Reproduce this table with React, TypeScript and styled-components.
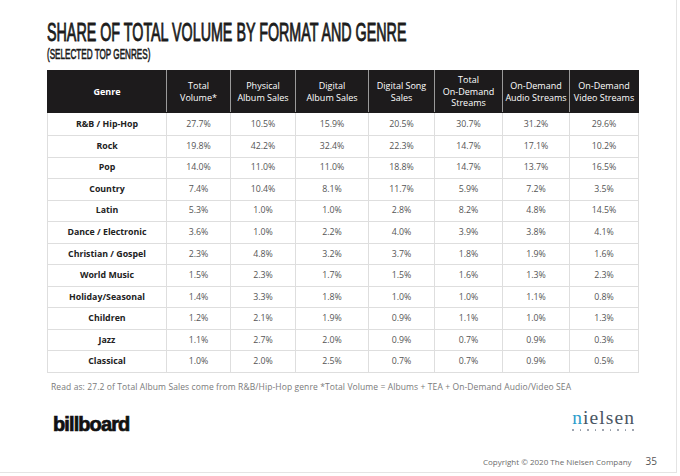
import React from 'react';
import styled, { createGlobalStyle } from 'styled-components';

const Global = createGlobalStyle`
  body {
    margin: 0;
    background: #fff;
    font-family: "Open Sans", "Liberation Sans", sans-serif;
  }
`;

const Page = styled.div`
  width: 677px;
  height: 473px;
  border-right: 1px solid #e4e4e4;
  border-bottom: 1px solid #e4e4e4;
  padding: 20px 0 0 47px;
  box-sizing: border-box;
  overflow: hidden;
`;

const Title = styled.h1`
  margin: 0;
  font-family: "Liberation Sans", Arial, sans-serif;
  font-weight: 400;
  font-size: 25px;
  line-height: 25px;
  color: #1c1c1c;
  -webkit-text-stroke: 0.9px #1c1c1c;
  white-space: nowrap;
  display: inline-block;
  transform: scaleX(0.572);
  transform-origin: left top;
`;

const Subtitle = styled.h2`
  margin: 2px 0 0;
  font-family: "Liberation Sans", Arial, sans-serif;
  font-weight: 400;
  font-size: 14px;
  line-height: 14px;
  color: #1c1c1c;
  -webkit-text-stroke: 0.6px #1c1c1c;
  white-space: nowrap;
  display: inline-block;
  transform: scaleX(0.58);
  transform-origin: left top;
`;

const TitleBlock = styled.div`
  display: flex;
  flex-direction: column;
  align-items: flex-start;
  height: 50px;
`;

const Table = styled.table`
  border-collapse: collapse;
  table-layout: fixed;
  width: 591px;
  font-size: 8.8px;
`;

const HeadCell = styled.th<{ $w: number; $bold?: boolean }>`
  width: ${(p) => p.$w}px;
  height: 42px;
  padding: 0;
  box-sizing: border-box;
  background: #1d1b1c;
  color: #fff;
  font-weight: ${(p) => (p.$bold ? 700 : 400)};
  font-size: 9px;
  line-height: 11.5px;
  white-space: nowrap;
  text-align: center;
  vertical-align: middle;
  border: 1px solid #9a9a9a;
  border-top-color: #1d1b1c;
  border-bottom-color: #1d1b1c;
  &:first-child { border-left-color: #1d1b1c; }
  &:last-child { border-right-color: #1d1b1c; }
`;

const Row = styled.tr<{ $first?: boolean }>`
  height: ${(p) => (p.$first ? 23 : 21.55)}px;
`;

const Cell = styled.td<{ $genre?: boolean }>`
  padding: 0;
  text-align: center;
  vertical-align: middle;
  border: 1px solid #dedede;
  color: ${(p) => (p.$genre ? '#222' : '#555')};
  font-weight: ${(p) => (p.$genre ? 700 : 400)};
  line-height: 11px;
`;

const Footnote = styled.p`
  margin: 8px 0 0 4px;
  font-size: 8.5px;
  line-height: 12px;
  color: #7a7a7a;
  letter-spacing: 0.1px;
`;

const Brands = styled.div`
  display: flex;
  justify-content: space-between;
  align-items: flex-start;
  width: 581px;
  margin: 16px 0 0 6px;
`;

const Billboard = styled.span`
  font-family: "Liberation Sans", Arial, sans-serif;
  font-weight: 700;
  font-size: 20px;
  line-height: 20px;
  letter-spacing: -0.9px;
  color: #111;
  -webkit-text-stroke: 0.7px #111;
  margin-top: 5px;
`;

const Nielsen = styled.div`
  display: flex;
  flex-direction: column;
  align-items: center;
`;

const NielsenWord = styled.span`
  font-family: "Liberation Serif", "Times New Roman", serif;
  font-size: 19.5px;
  line-height: 17px;
  letter-spacing: 1.1px;
  margin-right: -1.1px;
  color: #4a5563;
`;

const NielsenN = styled.span`
  color: #2b9dcc;
`;

const Dots = styled.div`
  display: flex;
  gap: 5.9px;
  margin-top: 3px;
  span {
    width: 1.6px;
    height: 1.6px;
    border-radius: 50%;
    background: #8d95a0;
  }
`;

const Copyright = styled.div`
  display: flex;
  justify-content: flex-end;
  align-items: baseline;
  gap: 14px;
  padding-right: 19px;
  margin-top: 21px;
  font-size: 8px;
  line-height: 12px;
  color: #6b6b6b;
`;

const PageNum = styled.span`
  font-size: 10px;
  color: #555;
`;

const columns: { label: React.ReactNode; w: number }[] = [
  { label: 'Genre', w: 119 },
  { label: <>Total<br />Volume*</>, w: 64 },
  { label: <>Physical<br />Album Sales</>, w: 65 },
  { label: <>Digital<br />Album Sales</>, w: 73 },
  { label: <>Digital Song<br />Sales</>, w: 66 },
  { label: <>Total<br />On-Demand<br />Streams</>, w: 68 },
  { label: <>On-Demand<br />Audio Streams</>, w: 67 },
  { label: <>On-Demand<br />Video Streams</>, w: 69 },
];

const rows: [string, ...string[]][] = [
  ['R&B / Hip-Hop', '27.7%', '10.5%', '15.9%', '20.5%', '30.7%', '31.2%', '29.6%'],
  ['Rock', '19.8%', '42.2%', '32.4%', '22.3%', '14.7%', '17.1%', '10.2%'],
  ['Pop', '14.0%', '11.0%', '11.0%', '18.8%', '14.7%', '13.7%', '16.5%'],
  ['Country', '7.4%', '10.4%', '8.1%', '11.7%', '5.9%', '7.2%', '3.5%'],
  ['Latin', '5.3%', '1.0%', '1.0%', '2.8%', '8.2%', '4.8%', '14.5%'],
  ['Dance / Electronic', '3.6%', '1.0%', '2.2%', '4.0%', '3.9%', '3.8%', '4.1%'],
  ['Christian / Gospel', '2.3%', '4.8%', '3.2%', '3.7%', '1.8%', '1.9%', '1.6%'],
  ['World Music', '1.5%', '2.3%', '1.7%', '1.5%', '1.6%', '1.3%', '2.3%'],
  ['Holiday/Seasonal', '1.4%', '3.3%', '1.8%', '1.0%', '1.0%', '1.1%', '0.8%'],
  ['Children', '1.2%', '2.1%', '1.9%', '0.9%', '1.1%', '1.0%', '1.3%'],
  ['Jazz', '1.1%', '2.7%', '2.0%', '0.9%', '0.7%', '0.9%', '0.3%'],
  ['Classical', '1.0%', '2.0%', '2.5%', '0.7%', '0.7%', '0.9%', '0.5%'],
];

function App() {
  return (
    <Page>
      <Global />
      <TitleBlock>
        <Title>SHARE OF TOTAL VOLUME BY FORMAT AND GENRE</Title>
        <Subtitle>(SELECTED TOP GENRES)</Subtitle>
      </TitleBlock>
      <Table>
        <thead>
          <tr>
            {columns.map((c, i) => (
              <HeadCell key={i} $w={c.w} $bold={i === 0}>
                {c.label}
              </HeadCell>
            ))}
          </tr>
        </thead>
        <tbody>
          {rows.map((r, i) => (
            <Row key={r[0]} $first={i === 0}>
              {r.map((v, j) => (
                <Cell key={j} $genre={j === 0}>
                  {v}
                </Cell>
              ))}
            </Row>
          ))}
        </tbody>
      </Table>
      <Footnote>
        Read as: 27.2 of Total Album Sales come from R&amp;B/Hip-Hop genre *Total Volume = Albums + TEA + On-Demand Audio/Video SEA
      </Footnote>
      <Brands>
        <Billboard>billboard</Billboard>
        <Nielsen>
          <NielsenWord>
            <NielsenN>n</NielsenN>ielsen
          </NielsenWord>
          <Dots>
            {Array.from({ length: 9 }).map((_, i) => (
              <span key={i} />
            ))}
          </Dots>
        </Nielsen>
      </Brands>
      <Copyright>
        <span>Copyright © 2020 The Nielsen Company</span>
        <PageNum>35</PageNum>
      </Copyright>
    </Page>
  );
}

export default App;
